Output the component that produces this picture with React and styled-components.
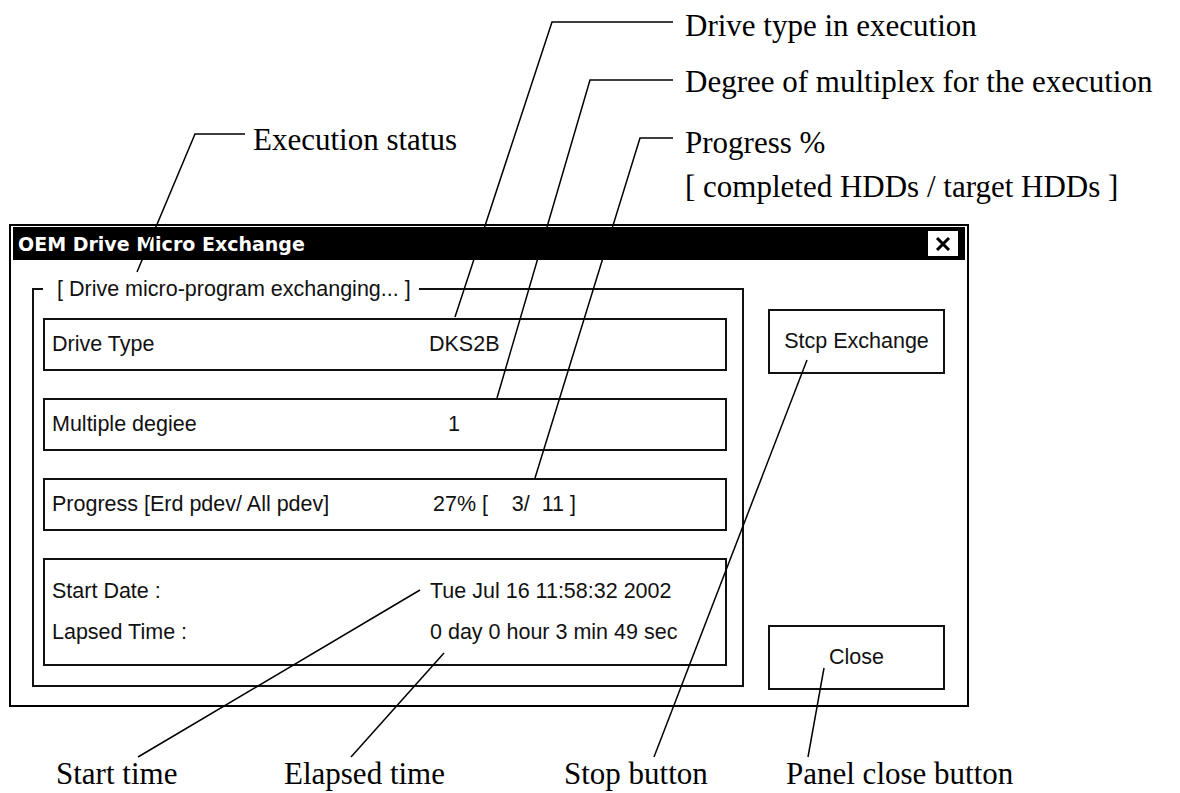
import React from 'react'
import styled, { createGlobalStyle } from 'styled-components'

const Global = createGlobalStyle`
  html, body {
    margin: 0;
    padding: 0;
    background: #fff;
  }
`

const Page = styled.div`
  position: relative;
  width: 1180px;
  height: 793px;
  box-sizing: border-box;
  padding: 224px 0 0 9px;
  background: #fff;
  overflow: hidden;
`

const Dialog = styled.div`
  width: 960px;
  height: 483px;
  box-sizing: border-box;
  border: 2px solid #000;
  padding: 1px 2px 0 2px;
  display: flex;
  flex-direction: column;
  background: #fff;
  font-family: 'Liberation Sans', Arial, sans-serif;
  font-size: 21.5px;
  color: #111;
`

const TitleBar = styled.div`
  height: 33px;
  flex: none;
  background: #000;
  color: #fff;
  display: flex;
  align-items: center;
  justify-content: space-between;
  padding: 0 7px 0 5px;
  font-family: 'DejaVu Sans', Verdana, sans-serif;
  font-weight: bold;
  font-size: 19px;
`

const CloseBox = styled.div`
  width: 30px;
  height: 25px;
  background: #fff;
  display: flex;
  align-items: center;
  justify-content: center;
`

const Body = styled.div`
  flex: 1;
  display: flex;
  gap: 24px;
  padding: 17px 20px 18px 19px;
`

const Group = styled.fieldset`
  margin: 0;
  width: 712px;
  box-sizing: border-box;
  min-width: 0;
  flex: none;
  border: 2px solid #111;
  padding: 17px 15px 19px 9px;
  display: flex;
  flex-direction: column;
  gap: 27px;
`

const Legend = styled.legend`
  margin-left: 0;
  padding: 0 8px 0 14px;
  line-height: 24px;
`

const Field = styled.div`
  height: ${p => (p.$tall ? 108 : 53)}px;
  box-sizing: border-box;
  border: 2px solid #111;
  padding: 0 15px 0 7px;
  display: flex;
  flex-direction: column;
  justify-content: center;
`

const Row = styled.div`
  display: grid;
  grid-template-columns: 376px 1fr;
  align-items: center;
  height: ${p => (p.$compact ? 41 : 49)}px;
`

const Value = styled.span`
  padding-left: ${p => p.$indent || 0}px;
  white-space: pre;
`

const Buttons = styled.div`
  width: 177px;
  flex: none;
  display: flex;
  flex-direction: column;
  justify-content: space-between;
  padding-top: 32px;
  margin-bottom: -3px;
`

const Button = styled.div`
  height: 65px;
  box-sizing: border-box;
  border: 2px solid #111;
  display: flex;
  align-items: center;
  justify-content: center;
  background: #fff;
`

const Leaders = styled.svg`
  position: absolute;
  left: 0;
  top: 0;
  pointer-events: none;
`

const Callout = styled.div`
  position: absolute;
  left: ${p => p.$x}px;
  top: ${p => p.$y}px;
  font-family: 'Liberation Serif', 'Times New Roman', serif;
  font-size: 31px;
  line-height: ${p => (p.$lines ? 44 : 36)}px;
  color: #000;
  white-space: nowrap;
`

const leaders = [
  '245,134 195,134 137,272',
  '673,22 552,22 455,317',
  '673,80 590,80 497,398',
  '673,138 640,138 535,478',
  '138,757 420,590',
  '351,757 444,653',
  '654,757 807,360',
  '808,757 824,668',
]

const callouts = [
  { x: 253, y: 122, text: 'Execution status' },
  { x: 685, y: 8, text: 'Drive type in execution' },
  { x: 685, y: 64, text: 'Degree of multiplex for the execution' },
  { x: 56, y: 756, text: 'Start time' },
  { x: 284, y: 756, text: 'Elapsed time' },
  { x: 564, y: 756, text: 'Stop button' },
  { x: 786, y: 756, text: 'Panel close button' },
]

const App = () => {
  return (
    <Page>
      <Global />
      <Dialog>
        <TitleBar>
          <span>OEM Drive Micro Exchange</span>
          <CloseBox>
            <svg width="16" height="14" viewBox="0 0 16 14">
              <path d="M2 1 L14 13 M14 1 L2 13" stroke="#000" strokeWidth="3" />
            </svg>
          </CloseBox>
        </TitleBar>
        <Body>
          <Group>
            <Legend>[ Drive micro-program exchanging... ]</Legend>
            <Field>
              <Row>
                <span>Drive Type</span>
                <Value $indent={1}>DKS2B</Value>
              </Row>
            </Field>
            <Field>
              <Row>
                <span>Multiple degiee</span>
                <Value $indent={20}>1</Value>
              </Row>
            </Field>
            <Field>
              <Row>
                <span>Progress [Erd pdev/ All pdev]</span>
                <Value $indent={5}>{'27% [    3/  11 ]'}</Value>
              </Row>
            </Field>
            <Field $tall>
              <Row $compact>
                <span>Start Date :</span>
                <Value $indent={2}>Tue Jul 16 11:58:32 2002</Value>
              </Row>
              <Row $compact>
                <span>Lapsed Time :</span>
                <Value $indent={2}>0 day 0 hour 3 min 49 sec</Value>
              </Row>
            </Field>
          </Group>
          <Buttons>
            <Button>Stcp Exchange</Button>
            <Button>Close</Button>
          </Buttons>
        </Body>
      </Dialog>

      <Leaders width="1180" height="793" viewBox="0 0 1180 793">
        {leaders.map(points => (
          <polyline key={points} points={points} fill="none" stroke="#000" strokeWidth="1.5" />
        ))}
      </Leaders>

      {callouts.map(c => (
        <Callout key={c.text} $x={c.x} $y={c.y}>
          {c.text}
        </Callout>
      ))}
      <Callout $x={685} $y={121} $lines>
        Progress %
        <br />[ completed HDDs / target HDDs ]
      </Callout>
    </Page>
  )
}

export default App
